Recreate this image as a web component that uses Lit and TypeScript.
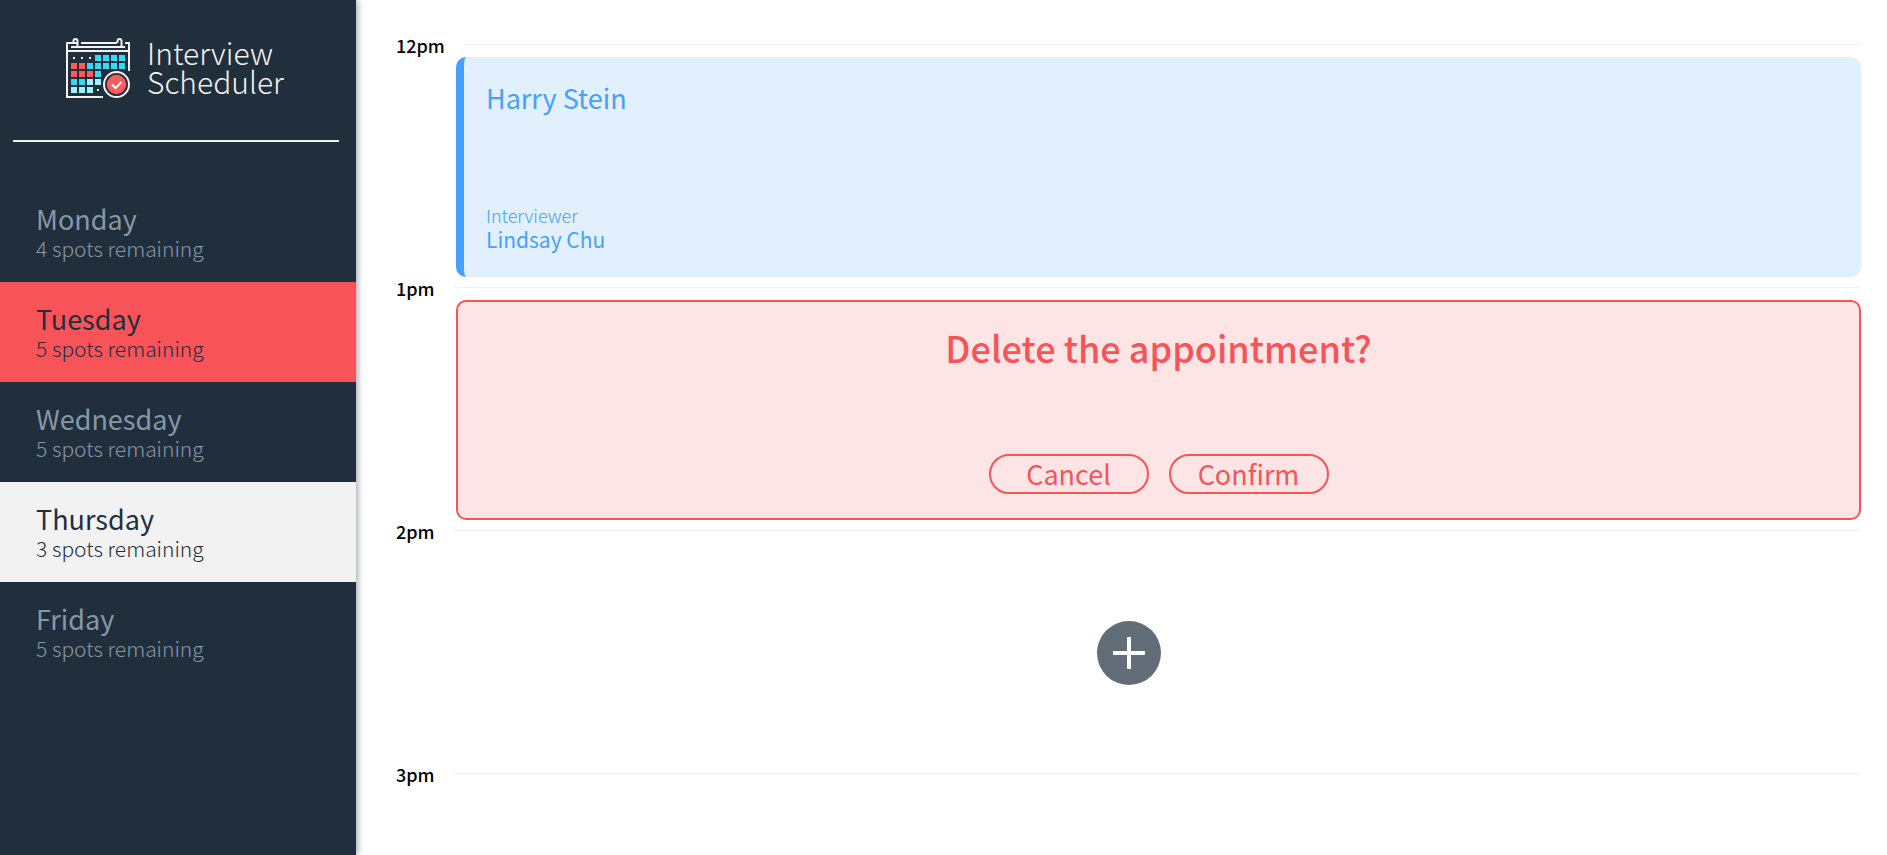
import { LitElement, html, css, svg } from "lit";
import { customElement, property, state } from "lit/decorators.js";

interface Day {
  name: string;
  spots: number;
}

const DAYS: Day[] = [
  { name: "Monday", spots: 4 },
  { name: "Tuesday", spots: 5 },
  { name: "Wednesday", spots: 5 },
  { name: "Thursday", spots: 3 },
  { name: "Friday", spots: 5 },
];

// Calendar cells: column, row, colour class
const CELLS: [number, number, string][] = [
  [3, 0, "cyan"], [4, 0, "cyan"], [5, 0, "cyan"], [6, 0, "cyan"],
  [0, 1, "red"], [1, 1, "red"], [2, 1, "cyan"], [3, 1, "cyan"], [4, 1, "cyan"], [5, 1, "cyan"], [6, 1, "cyan"],
  [0, 2, "red"], [1, 2, "red"], [2, 2, "red"], [3, 2, "cyan"],
  [0, 3, "cyan"], [1, 3, "cyan"], [2, 3, "pale"], [3, 3, "pale"],
  [0, 4, "pale"], [1, 4, "pale"], [2, 4, "pale"],
];

@customElement("scheduler-logo")
class SchedulerLogo extends LitElement {
  static styles = css`
    :host { display: flex; align-items: center; gap: 17px; color: #f2f2f2; }
    .mark { width: 64px; height: 60px; flex: none; }
    .line { fill: none; stroke: #f2f2f2; stroke-width: 2; }
    .dot { fill: #f2f2f2; }
    .cyan { fill: #33dbf2; }
    .pale { fill: #a0f1fb; }
    .red { fill: #ff5a5f; }
    .name { margin: 0; font-size: 30px; line-height: 29px; font-weight: 200; }
    .word { display: block; }
  `;
  render() {
    return html`
      <svg class="mark" viewBox="0 0 64 60" aria-hidden="true">
        <path class="line" d="M37 59H1V5H11M15 5H51M59 5H63V33M1 13H63M5 9H59" />
        <path class="line" d="M11.500 9V3a2 2 0 0 0-4 0V5M55.500 9V3a2 2 0 0 0-4 0V5" />
        ${[7, 15, 23].map((x) => svg`<rect class="dot" x=${x} y="19" width="2" height="2" />`)}
        <rect class="dot" x="31" y="51" width="2" height="2" />
        ${CELLS.map(([c, r, k]) => svg`<rect class=${k} x=${5 + c * 8} y=${17 + r * 8} width="6" height="6" />`)}
        <circle class="line" cx="50.500" cy="46.500" r="12.500" />
        <circle class="red" cx="50.500" cy="46.500" r="9.700" />
        <path d="M46 46.500l3.500 3.500L55.500 44" fill="none" stroke="#fff" stroke-width="2" />
      </svg>
      <h1 class="name"><span class="word">Interview</span><span class="word">Scheduler</span></h1>
    `;
  }
}

@customElement("day-list")
class DayList extends LitElement {
  @property() selected = "";
  @property() hovered = "";
  static styles = css`
    .days { list-style: none; margin: 0; padding: 0; }
    .day {
      display: block; width: 100%; height: 100px; padding: 20px 36px; border: 0;
      background: none; color: #8697a8; text-align: left; font-family: inherit; cursor: pointer;
    }
    .day.hovered { background: #f85359; color: #212f3d; }
    .day.selected { background: #f2f2f2; color: #212f3d; }
    .title { display: block; font-size: 27px; line-height: 32px; font-weight: 400; }
    .spots { display: block; font-size: 21px; line-height: 26px; font-weight: 300; }
  `;
  render() {
    return html`<ul class="days">
      ${DAYS.map((d) => html`<li>
        <button type="button"
          class="day ${d.name === this.selected ? "selected" : d.name === this.hovered ? "hovered" : ""}"
          @click=${() => this.dispatchEvent(new CustomEvent("pick", { detail: d.name }))}>
          <span class="title">${d.name}</span>
          <span class="spots">${d.spots} spots remaining</span>
        </button>
      </li>`)}
    </ul>`;
  }
}

@customElement("time-slot")
class TimeSlot extends LitElement {
  @property() time = "";
  static styles = css`
    :host { display: block; }
    .header { display: flex; align-items: center; gap: 18px; height: 23px; }
    .time { margin: 0; font-size: 18px; line-height: 23px; font-weight: 500; color: #000; }
    .rule { flex: 1; border: 0; border-top: 1px solid #f2f2f2; margin: 0 0 3px; }
    .body { min-height: 220px; display: grid; }
  `;
  render() {
    return html`
      <header class="header"><h2 class="time">${this.time}</h2><hr class="rule" /></header>
      <div class="body"><slot></slot></div>
    `;
  }
}

@customElement("app-root")
class AppRoot extends LitElement {
  @state() day = "Thursday";
  static styles = css`
    :host {
      display: flex; height: 100vh; overflow: hidden; background: #fff;
      font-family: "Source Sans Pro", "Noto Sans CJK JP", sans-serif;
    }
    *, *::before, *::after { box-sizing: border-box; }
    .sidebar {
      flex: 0 0 356px; background: #212f3d; z-index: 1;
      box-shadow: 2px 0 6px rgba(32, 46, 62, 0.4);
    }
    .logo { padding: 38px 66px 0; height: 140px; align-items: flex-start; }
    .divider { border: 0; height: 2px; background: #f2f2f2; margin: 0 17px 40px 13px; }
    .schedule { flex: 1; min-width: 0; padding: 34px 26px 0 40px; }
    .card { margin-left: 60px; border-radius: 10px; display: flex; flex-direction: column; justify-content: space-between; }
    .booked { background: #e2f0fe; color: #45a1fd; border-left: 8px solid #45a1fd; padding: 23px 22px 25px; }
    .student { margin: 0; font-size: 27px; line-height: 36px; font-weight: 400; }
    .label { margin: 0; font-size: 18px; line-height: 21px; font-weight: 300; }
    .interviewer { margin: 0; font-size: 21px; line-height: 26px; font-weight: 400; }
    .confirm { background: #fee5e5; color: #f85359; border: 2px solid #f85359; padding: 21px 24px 24px; align-items: center; }
    .question { margin: 0; font-size: 36px; line-height: 48px; font-weight: 500; }
    .actions { display: flex; gap: 20px; }
    .action {
      width: 160px; height: 40px; border: 2px solid #f85359; border-radius: 20px; padding: 0;
      background: none; color: inherit; font: 400 27px/36px "Source Sans Pro", "Noto Sans CJK JP", sans-serif; cursor: pointer;
    }
    .empty { display: flex; align-items: center; justify-content: center; }
    .add { width: 64px; height: 64px; border: 0; border-radius: 50%; padding: 0; background: #636d78; cursor: pointer; }
    .plus { display: block; width: 64px; height: 64px; }
  `;
  render() {
    return html`
      <nav class="sidebar" aria-label="Days">
        <scheduler-logo class="logo"></scheduler-logo>
        <hr class="divider" />
        <day-list .selected=${this.day} hovered="Tuesday"
          @pick=${(e: CustomEvent) => (this.day = e.detail)}></day-list>
      </nav>
      <main class="schedule">
        <time-slot time="12pm">
          <article class="card booked">
            <h3 class="student">Harry Stein</h3>
            <div>
              <p class="label">Interviewer</p>
              <p class="interviewer">Lindsay Chu</p>
            </div>
          </article>
        </time-slot>
        <time-slot time="1pm">
          <section class="card confirm">
            <h3 class="question">Delete the appointment?</h3>
            <div class="actions">
              <button type="button" class="action">Cancel</button>
              <button type="button" class="action">Confirm</button>
            </div>
          </section>
        </time-slot>
        <time-slot time="2pm">
          <div class="empty">
            <button type="button" class="add" aria-label="Add appointment">
              <svg class="plus" viewBox="0 0 64 64" aria-hidden="true">
                <path d="M32 16V48M16 32H48" stroke="#fff" stroke-width="4" />
              </svg>
            </button>
          </div>
        </time-slot>
        <time-slot time="3pm"></time-slot>
      </main>
    `;
  }
}
